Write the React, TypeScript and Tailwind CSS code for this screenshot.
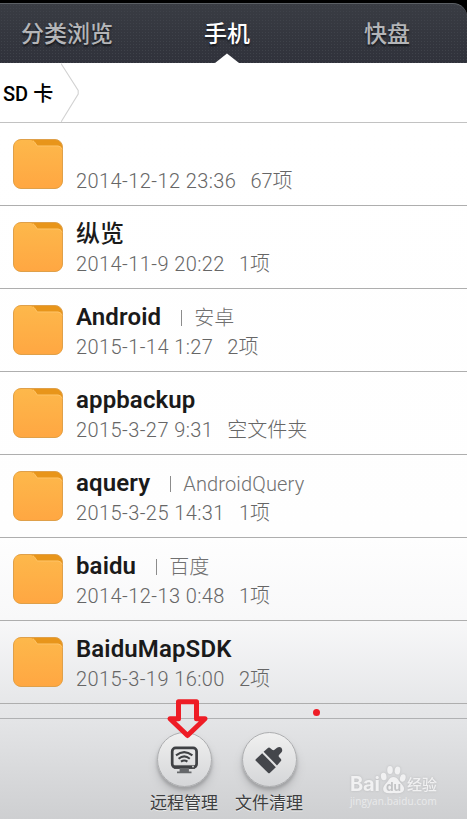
type Folder = {
  name: string;
  alias?: string;
  date: string;
  count: string;
};

const TABS = [
  { label: "分类浏览", active: false },
  { label: "手机", active: true },
  { label: "快盘", active: false },
];

const FOLDERS: Folder[] = [
  { name: "", date: "2014-12-12 23:36", count: "67项" },
  { name: "纵览", date: "2014-11-9 20:22", count: "1项" },
  { name: "Android", alias: "安卓", date: "2015-1-14 1:27", count: "2项" },
  { name: "appbackup", date: "2015-3-27 9:31", count: "空文件夹" },
  { name: "aquery", alias: "AndroidQuery", date: "2015-3-25 14:31", count: "1项" },
  { name: "baidu", alias: "百度", date: "2014-12-13 0:48", count: "1项" },
  { name: "BaiduMapSDK", date: "2015-3-19 16:00", count: "2项" },
];

export default function App() {
  return (
    <div className="relative flex h-[819px] w-[467px] flex-col overflow-hidden bg-white font-[Roboto,'Noto_Sans_CJK_SC',sans-serif]">
      <Tabs />
      <div className="flex h-[60px] shrink-0 items-center border-b border-[#c2c2c2] bg-white">
        <span className="ml-[3px] w-[58px] pt-[3px] whitespace-nowrap text-[20px] leading-none font-medium text-black">
          SD 卡
        </span>
        <svg width="19" height="59" viewBox="0 0 19 59" fill="none">
          <path d="M0 0.5L17.2 27.5V31L0 59" stroke="#d2d2d2" strokeWidth="1.1" />
        </svg>
      </div>

      <div className="flex grow flex-col bg-[linear-gradient(to_bottom,#ffffff_0px,#fefefe_415px,#f8f8f9_495px,#e6e7e9_580px,#e4e5e7_596px)]">
        {FOLDERS.map((folder) => (
          <FolderRow key={folder.date} folder={folder} />
        ))}
      </div>

      <Footer />
      <Annotations />
    </div>
  );
}

function Tabs() {
  return (
    <div className="h-[63px] shrink-0 bg-black pt-[3px]">
      <div className="flex h-[60px] rounded-tr-[14px] border-t border-[#5c6065] bg-[#33363e] bg-[radial-gradient(circle,#3f424a_0.6px,transparent_1px),linear-gradient(to_bottom,#393c43,#30323b)] bg-[length:3px_3px,100%_100%]">
        {TABS.map((tab) => (
          <div
            key={tab.label}
            className={
              tab.active
                ? "relative flex w-[186px] justify-center pt-[19px] text-[23px] leading-[24px] font-medium text-white [text-shadow:0_2px_2px_#15171c]"
                : "flex w-[134px] justify-center pt-[19px] text-[23px] leading-[24px] font-medium text-[#b4b5b8] [text-shadow:0_2px_2px_#15171c]"
            }
          >
            {tab.label}
            {tab.active && (
              <svg className="absolute bottom-0 left-[81px]" width="24" height="10" viewBox="0 0 24 10">
                <path d="M0 10L12 0.5L24 10Z" fill="#fff" />
              </svg>
            )}
          </div>
        ))}
      </div>
    </div>
  );
}

function FolderRow({ folder }: { folder: Folder }) {
  // the CJK face is already heavy enough at medium
  const isLatin = /^[\w]+$/.test(folder.name);

  return (
    <div className="flex h-[83px] shrink-0 border-b border-[#aeaeae] pl-[13px] pt-4">
      <FolderIcon />
      <div className="ml-[13px] whitespace-nowrap">
        <div className="-mt-1 flex h-[31px] items-center">
          <span
            className={
              isLatin
                ? "text-[24px] leading-[30px] font-semibold tracking-[0.12px] text-[#1a1a1a]"
                : "text-[24px] leading-[30px] font-medium text-[#1a1a1a]"
            }
          >
            {folder.name}
          </span>
          {folder.alias && (
            <span className="ml-[20px] flex items-center pt-[3px] text-[20px] leading-[28px] font-light tracking-[0.15px] text-[#707070]">
              <span className="mr-[12px] h-[16px] w-px bg-[#8c8c8c]" />
              {folder.alias}
            </span>
          )}
        </div>
        <div className="flex gap-[14px] text-[20px] leading-[30px] font-light text-[#666666]">
          <span className="tracking-[0.42px]">{folder.date}</span>
          <span>{folder.count}</span>
        </div>
      </div>
    </div>
  );
}

function FolderIcon() {
  return (
    <svg className="shrink-0" width="50" height="50" viewBox="0 0 50 50">
      <defs>
        <linearGradient id="folder" x1="0" y1="0" x2="0" y2="1">
          <stop offset="0" stopColor="#fdb84b" />
          <stop offset="1" stopColor="#ffa742" />
        </linearGradient>
      </defs>
      <rect x="0.5" y="0.5" width="49" height="49" rx="7.5" fill="#e8951a" stroke="#dfa04a" />
      <path
        d="M8 1H18Q20.5 1 22 3.5L24.3 6.8H45Q49 6.8 49 12V42Q49 49 42 49H8Q1 49 1 42V8Q1 1 8 1Z"
        fill="url(#folder)"
      />
      <path d="M20 1.8Q21 2.2 22 3.7L24.3 7H45Q48 7 49 10.5" fill="none" stroke="#ffc76e" strokeWidth="0.8" />
    </svg>
  );
}

function Footer() {
  return (
    <div className="flex h-[101px] shrink-0 border-t border-[#b0b1b3] bg-linear-to-b from-[#e4e5e7] to-[#cecfd1] pl-[149px] pt-[13px]">
      <FooterButton label="远程管理">
        <svg width="28" height="28" viewBox="0 0 28 28" fill="none" stroke="#3f4144">
          <rect x="2.2" y="1.9" width="24.4" height="19.6" rx="3.5" strokeWidth="2.7" />
          <path d="M4 18.4H25" strokeWidth="1" stroke="#dcdcdc" />
          <path d="M4 21H25" strokeWidth="3.4" />
          <circle cx="23" cy="20.6" r="0.9" fill="#dcdcdc" stroke="none" />
          <path d="M6 9.4Q14.2 2.8 22.4 9.4M8.6 12.7Q14.2 8 19.8 12.7" strokeWidth="2" />
          <path d="M11 15.6Q14.2 13.4 17.4 15.6" strokeWidth="2.2" />
          <path d="M10.5 23V25H18V23ZM7 26.3H21.5" fill="#66686b" stroke="#66686b" strokeWidth="1.8" />
        </svg>
      </FooterButton>
      <FooterButton label="文件清理">
        <svg width="28" height="28" viewBox="0 0 28 28" fill="#44464b">
          <path d="M0.8 13.2L7.2 7.2L20.8 21.2L14.8 27Q14 27.7 13.2 27L0.8 14.8Q0 14 0.8 13.2Z" />
          <path d="M8.6 5.8L12.6 2.2Q14 1 15.4 2.2L17.2 3.7Q18.4 4.7 19.8 3.6L22 1.8Q24.4 0 26.3 1.8Q28.2 4.2 26.3 6.6L24.2 8.8Q23.1 10 24.3 11.2L25.7 12.7Q26.9 14 25.7 15.3L22 19.4Z" />
        </svg>
      </FooterButton>
    </div>
  );
}

function FooterButton({ label, children }: { label: string; children: React.ReactNode }) {
  return (
    <div className="mr-[15px] flex w-[70px] flex-col items-center">
      <div className="flex size-[55px] items-center justify-center rounded-full border border-[#adaeb0] bg-linear-to-b from-[#f0f0f0] to-[#d5d6d8] shadow-[0_3px_3px_#a2a3a5,0_7px_8px_#bcbdbf]">
        {children}
      </div>
      <span className="mt-[3px] text-[17px] leading-[26px] whitespace-nowrap text-[#3d3e40] [text-shadow:0_1px_0_#eeeeee]">
        {label}
      </span>
    </div>
  );
}

// Hand-drawn marks and the site watermark, above everything else
function Annotations() {
  return (
    <>
      <svg className="absolute left-[166px] top-[697px]" width="44" height="44" viewBox="0 0 44 44" fill="none">
        <path
          d="M12.5 4.8H30.5V21.8H39L21.5 38.5L4 21.8H12.5Z"
          stroke="#ee1c25"
          strokeWidth="5"
          strokeLinejoin="round"
        />
      </svg>
      <div className="absolute left-[313px] top-[709px] size-[7px] rounded-full bg-[#ee1c25]" />

      <div className="absolute left-[350px] top-[764px] w-[90px] text-[#f1f1f2]">
        <div className="flex h-[30px] items-end drop-shadow-[0_0_1px_#b8b9bb]">
          <span className="w-[30px] font-[Inter,sans-serif] text-[20px] leading-[19px] font-bold tracking-[-0.2px]">
            Bai
          </span>
          <svg width="27" height="30" viewBox="0 0 27 30" fill="#f1f1f2">
            <ellipse cx="3.7" cy="12.5" rx="2.8" ry="3.8" transform="rotate(-10 3.7 12.5)" />
            <ellipse cx="10" cy="6" rx="2.8" ry="4" />
            <ellipse cx="17.5" cy="6.5" rx="2.8" ry="4" transform="rotate(8 17.5 6.5)" />
            <ellipse cx="22.8" cy="14" rx="2.8" ry="3.8" transform="rotate(15 22.8 14)" />
            <path d="M13.3 13Q17 13 19 17L22 20.5Q26 25 22.5 28Q19.5 30 14 29Q7 30 4.5 28Q1.5 25 5 20.5L8 17Q10 13 13.3 13Z" />
            <text x="6" y="27" fontSize="12" fontWeight="700" fill="#c2c3c5" fontFamily="Inter, sans-serif">
              du
            </text>
          </svg>
          <span className="text-[15px] leading-[17px] font-medium whitespace-nowrap">经验</span>
        </div>
        <div className="mt-[2px] font-['Open_Sans',sans-serif] text-[10px] leading-[11px] tracking-[0.1px] text-[#e9eaeb]">
          jingyan.baidu.com
        </div>
      </div>
    </>
  );
}
